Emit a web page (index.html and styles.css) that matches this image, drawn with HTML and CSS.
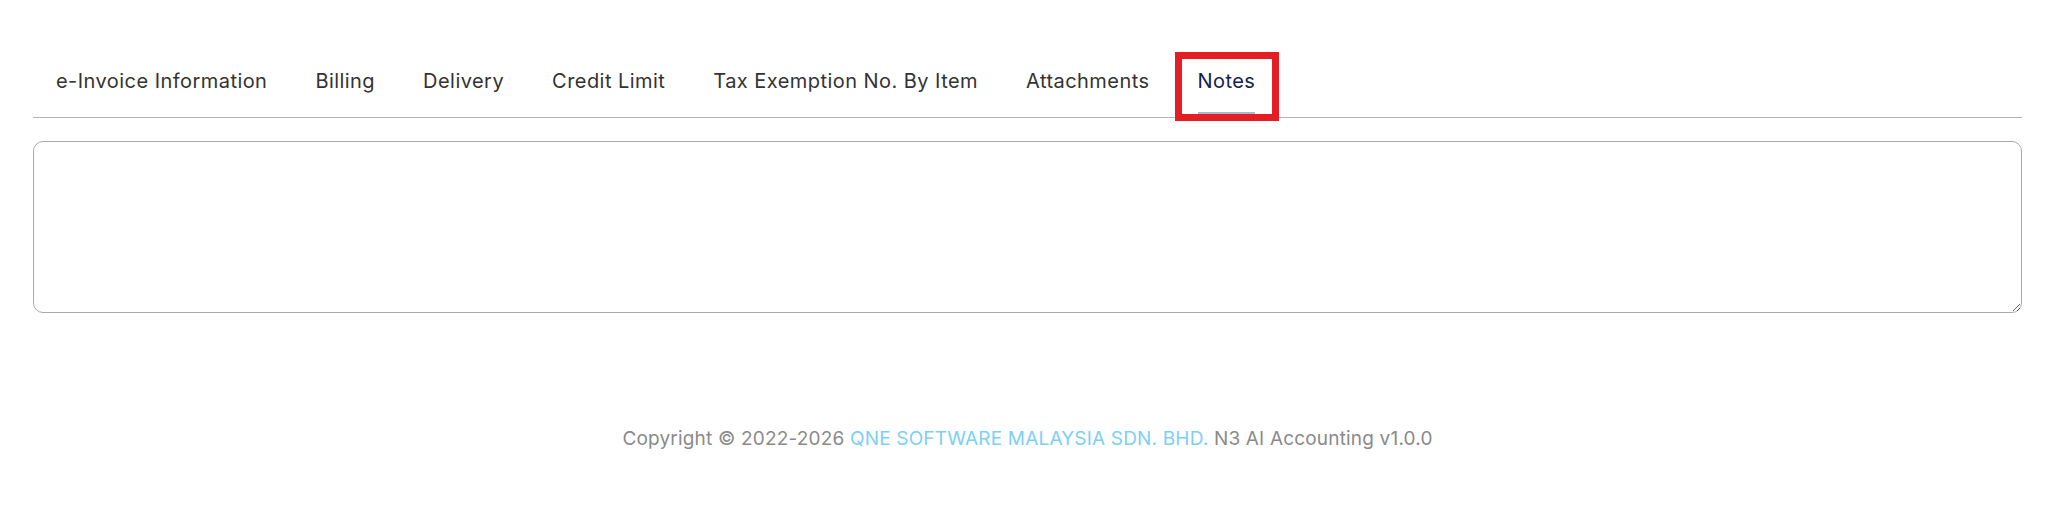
FILE: index.html
```html
<!DOCTYPE html>
<html lang="en">
<head>
<meta charset="utf-8">
<title>Notes</title>
<link rel="stylesheet" href="styles.css">
</head>
<body>
<main class="page">
  <nav class="tabs">
    <div class="tab">e-Invoice Information</div>
    <div class="tab">Billing</div>
    <div class="tab">Delivery</div>
    <div class="tab">Credit Limit</div>
    <div class="tab">Tax Exemption No. By Item</div>
    <div class="tab">Attachments</div>
    <div class="tab tab-active">Notes</div>
  </nav>
  <textarea class="notes"></textarea>
  <footer class="footer">Copyright &copy; 2022-2026 <span class="company">QNE SOFTWARE MALAYSIA SDN. BHD.</span> N3 AI Accounting v1.0.0</footer>
</main>
</body>
</html>
```
FILE: styles.css
```css
html, body {
  margin: 0;
  padding: 0;
  background: #ffffff;
}
body {
  font-family: Inter, "Noto Sans", sans-serif;
}
.page {
  padding: 52px 26px 0 33px;
}
.tabs {
  display: flex;
  border-bottom: 1px solid #b5b5b5;
  height: 65px;
}
.tab {
  position: relative;
  box-sizing: border-box;
  height: 65px;
  padding: 0 23px 6px 23px;
  margin-right: 2px;
  line-height: 59px;
  font-size: 20px;
  letter-spacing: 0.45px;
  color: #333333;
  white-space: nowrap;
}
.tab-active {
  color: #14224f;
}
.tab-active::after {
  content: "";
  position: absolute;
  left: 23px;
  right: 23px;
  bottom: 3px;
  height: 2px;
  background: #a9b8cc;
}
.tab-active::before {
  content: "";
  position: absolute;
  left: 0;
  top: 0;
  right: -1px;
  bottom: -4px;
  border: 7px solid #e41e25;
  z-index: 2;
}
.notes {
  display: block;
  box-sizing: border-box;
  width: 100%;
  height: 172px;
  margin: 23px 0 0 0;
  border: 1px solid #aaaaaa;
  border-radius: 10px;
  resize: vertical;
  font-family: inherit;
}
.footer {
  margin-top: 114px;
  text-align: center;
  font-size: 19px;
  letter-spacing: 0.18px;
  color: #8a8a8a;
}
.company {
  color: #7dd0f2;
}
```
